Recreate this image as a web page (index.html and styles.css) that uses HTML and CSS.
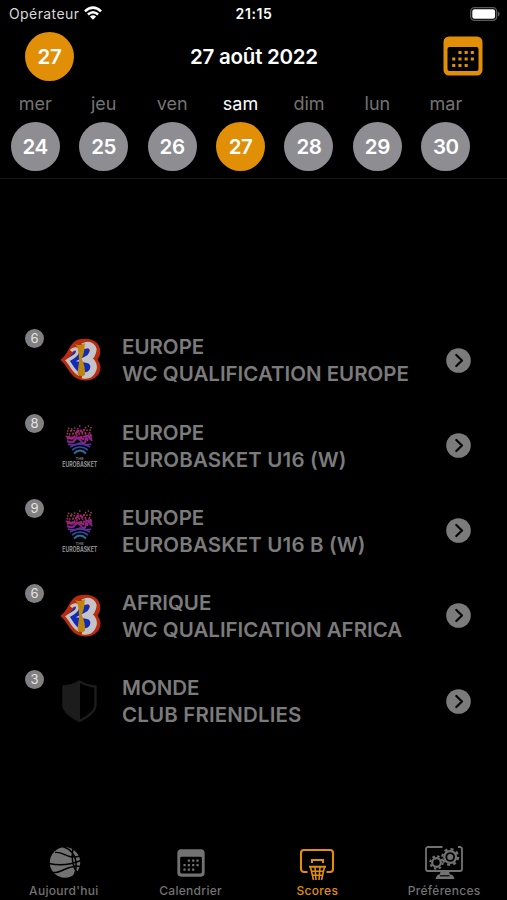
FILE: index.html
```html
<!DOCTYPE html>
<html lang="fr">
<head>
<meta charset="utf-8">
<title>Scores</title>
<link rel="stylesheet" href="styles.css">
</head>
<body>
<svg class="defs" width="0" height="0" aria-hidden="true">
  <symbol id="calendar" viewBox="0 0 40 40">
    <path fill="currentColor" fill-rule="evenodd" d="M6 .5h28a5.500 5.500 0 0 1 5.500 5.500v28a5.500 5.500 0 0 1-5.500 5.500H6A5.500 5.500 0 0 1 .5 34V6A5.500 5.500 0 0 1 6 .5ZM6.500 11A2 2 0 0 0 4.500 13v20a2 2 0 0 0 2 2h27a2 2 0 0 0 2-2V13a2 2 0 0 0-2-2Z"/>
    <path fill="none" stroke="currentColor" stroke-width="3.100" d="M15.400 16.500h3.100m3.100 0h3.100m3.100 0h3.100M9.200 23h3.100m3.100 0h3.100m3.100 0h3.100m3.100 0h3.100M9.200 29.500h3.100m3.100 0h3.100m3.100 0h3.100"/>
  </symbol>
  <symbol id="worldcup" viewBox="0 0 42 44">
    <path fill="#b82c0c" d="M.3 22C7 17 9 8 14 4C19-.5 32-.5 37 5c4.500 5 4 12 .5 16.500c4 5 4 12-.5 16.500c-5 5.500-14 5.500-20 2.500C9.500 37 7 27 .3 22Z"/>
    <path fill="#122bb5" d="M6 22C12 17 15 12 20 9l9 2 1 8 2 12-6 7-7-1C12 34 10 27 6 22Z"/>
    <g fill="none" stroke="#c4c3c7">
      <path stroke-width="6.500" d="M23 8.500C30 4.500 35 10 32.500 15c-1 3-3 5-6 6.500c7 1 8.500 7 6 11.500c-2 4-6 5-10 4"/>
      <path stroke-width="3.200" d="M11 13c3-3.500 7-2.500 6.500 1C17 18 11 20 7.500 22.500C11 26 12.500 33 19.500 36.500"/>
    </g>
    <path fill="#bd8510" d="M15 6c3 2 7 1 10-1c-1 5 0 10-3.500 15.500c2.500 5 4 11 3.500 16.500q-3 2-7 0c-1-5 1.500-11 1-16.500C18.500 15 19 11 15 6Z"/>
  </symbol>
  <symbol id="eurobasket" viewBox="0 0 42 44">
    <g fill="none" stroke-width="1.600">
      <g stroke-dasharray="1.500 1.700">
        <path stroke="#914052" d="M6 4c3 2 6 1 8-1M17 2h2m4 2l5-3M29 3v3M5 7l25-1M7 10h22"/>
        <path stroke="#b52470" d="M9 6l5 8M16 4l-2 12M22 5l3 8M28 8l-4 7M5 9l5 7M29 10l-4 7M13 9h12"/>
      </g>
      <path stroke="#a42378" stroke-width="2" stroke-dasharray="4 .5" d="M4 12q6 4 12 2t14-2M5 15q6-3 12-1t13 0M14 9q4-5 7 0"/>
      <path stroke="#7e278e" stroke-width="2" d="M5 17q6 3 8-1t6 1 5-2 6 2"/>
      <path stroke="#6a2c9b" d="M6 20q6 2 12-1 6 3 11 1"/>
      <path stroke="#4a359e" d="M8 23q10-6 20 0"/>
      <path stroke="#344c9f" d="M10 26q8-6 16 0"/>
      <path stroke="#2174a2" stroke-width="1.800" d="M12 29.500q6-6 12 0"/>
    </g>
  </symbol>
  <symbol id="shield" viewBox="0 0 42 44">
    <path fill="none" stroke="#1c1c1c" stroke-width="2.400" stroke-linejoin="round" d="M19.500 2.500Q27 7 35.500 7.500V26q0 8-16 16Q3.500 34 3.500 26V7.500Q12 7 19.500 2.500Z"/>
    <path fill="#1c1c1c" d="M20 2Q12 7 3 7.500V26q0 8 17 16.500Z"/>
  </symbol>
  <symbol id="chevron" viewBox="0 0 25 25">
    <circle cx="12.500" cy="12.500" r="12.300" fill="#7b7b7b"/>
    <path fill="none" stroke="#050505" stroke-width="2.200" stroke-linecap="round" stroke-linejoin="round" d="M10.300 7l5.700 5.500-5.700 5.500"/>
  </symbol>
</svg>

<div class="status">
  <div class="network">
    <span class="carrier">Opérateur</span>
    <svg class="wifi" viewBox="0 0 18 14"><g fill="none" stroke="#fff" stroke-width="2.500"><path d="M.9 5.300Q9-2.100 17.100 5.300M3.900 8.500Q9 3.900 14.100 8.500"/></g><path fill="#fff" d="M5.900 10.500Q9 8 12.100 10.500L9 13.700Z"/></svg>
  </div>
  <span class="clock">21:15</span>
  <svg class="battery" viewBox="0 0 30 14"><rect x=".7" y=".7" width="26" height="12.600" rx="3.800" fill="none" stroke="#5b5b5b" stroke-width="1.300"/><rect x="2.300" y="2.300" width="22.800" height="9.400" rx="2.200" fill="#fff"/><path fill="#5b5b5b" d="M28 4.700q1.700.6 1.700 2.300T28 9.300Z"/></svg>
</div>

<header class="header">
  <span class="disc active">27</span>
  <h1 class="title">27 août 2022</h1>
  <svg class="picker"><use href="#calendar"/></svg>
</header>

<nav class="week">
  <div class="day"><span class="name">mer</span><span class="disc">24</span></div>
  <div class="day"><span class="name">jeu</span><span class="disc">25</span></div>
  <div class="day"><span class="name">ven</span><span class="disc">26</span></div>
  <div class="day"><span class="name now">sam</span><span class="disc active">27</span></div>
  <div class="day"><span class="name">dim</span><span class="disc">28</span></div>
  <div class="day"><span class="name">lun</span><span class="disc">29</span></div>
  <div class="day"><span class="name">mar</span><span class="disc">30</span></div>
</nav>

<main class="list">
  <div class="row"><span class="count">6</span><svg class="logo"><use href="#worldcup"/></svg><div class="label"><div>EUROPE</div><div>WC QUALIFICATION EUROPE</div></div><svg class="go"><use href="#chevron"/></svg></div>
  <div class="row"><span class="count">8</span><svg class="logo" viewBox="0 0 42 44"><use href="#eurobasket" x="2" width="42" height="44"/><text class="logo-small" x="15.500" y="36">THE</text><text class="logo-name" x="2.300" y="43" textLength="35" lengthAdjust="spacingAndGlyphs">EUROBASKET</text></svg><div class="label"><div>EUROPE</div><div class="wide">EUROBASKET U16 (W)</div></div><svg class="go"><use href="#chevron"/></svg></div>
  <div class="row"><span class="count">9</span><svg class="logo" viewBox="0 0 42 44"><use href="#eurobasket" x="2" width="42" height="44"/><text class="logo-small" x="15.500" y="36">THE</text><text class="logo-name" x="2.300" y="43" textLength="35" lengthAdjust="spacingAndGlyphs">EUROBASKET</text></svg><div class="label"><div>EUROPE</div><div class="wide">EUROBASKET U16 B (W)</div></div><svg class="go"><use href="#chevron"/></svg></div>
  <div class="row"><span class="count">6</span><svg class="logo"><use href="#worldcup"/></svg><div class="label"><div>AFRIQUE</div><div>WC QUALIFICATION AFRICA</div></div><svg class="go"><use href="#chevron"/></svg></div>
  <div class="row"><span class="count">3</span><svg class="logo"><use href="#shield"/></svg><div class="label"><div>MONDE</div><div class="wide">CLUB FRIENDLIES</div></div><svg class="go"><use href="#chevron"/></svg></div>
</main>

<footer class="tabs">
  <div class="tab">
    <svg class="tab-icon" viewBox="0 0 42 36"><circle cx="22" cy="18.500" r="15.200" fill="currentColor"/><g fill="none" stroke="#000" stroke-width="1.500"><path d="M6 19.500Q22 23 38 16.500M12 8.500C21 7 23 16 37.500 12M9.500 28.500C19 30 24 20 37.500 22.500M20 2.500Q32 7 33 18T29 34M30 4Q27 20 35 30"/></g></svg>
    <span>Aujourd'hui</span>
  </div>
  <div class="tab">
    <svg class="tab-icon" viewBox="0 0 42 36"><use href="#calendar" x="7" y="5" width="28" height="28"/></svg>
    <span>Calendrier</span>
  </div>
  <div class="tab selected">
    <svg class="tab-icon" viewBox="0 0 42 36"><g fill="none" stroke="currentColor" stroke-width="2.100"><path d="M11.500 28H8a3 3 0 0 1-3-3V9a3 3 0 0 1 3-3h26a3 3 0 0 1 3 3v16a3 3 0 0 1-3 3h-3.500M16 19v-3h11v3M13 22.800h17"/><path stroke-width="1.600" d="M14.500 23l3 13M28.500 23l-3 13M19 23l1 13M24 23l-1 13M15 27.300h13M16 31.300h11"/></g></svg>
    <span>Scores</span>
  </div>
  <div class="tab">
    <svg class="tab-icon" viewBox="0 0 42 36"><g fill="none" stroke="currentColor" stroke-width="1.800"><path d="M19.500 3H5a2 2 0 0 0-2 2v20a2 2 0 0 0 2 2H37a2 2 0 0 0 2-2V5a2 2 0 0 0-2-2h-2"/><circle cx="13.500" cy="18.500" r="4.300" stroke-width="2.200"/><circle cx="13.500" cy="18.500" r="6.200" stroke-width="2" stroke-dasharray="2.400 2.470"/><circle cx="27.200" cy="13" r="5.900" stroke-width="2.200"/><circle cx="27.200" cy="13" r="7.900" stroke-width="2.200" stroke-dasharray="3.100 3.105"/></g><circle cx="27.200" cy="13" r="3" fill="currentColor"/><path fill="currentColor" d="M17.500 27.500h8.500l.8 2.800q4 .7 4.700 4.700H12.500q.7-4 4.300-4.700Z"/><path stroke="#000" stroke-width="1.200" d="M17 31.800h9.500"/></svg>
    <span>Préférences</span>
  </div>
</footer>
</body>
</html>
```
FILE: styles.css
```css
* { box-sizing: border-box; }
body {
  margin: 0;
  width: 507px;
  height: 900px;
  overflow: hidden;
  display: flex;
  flex-direction: column;
  background: #000;
  color: #fff;
  font-family: Inter, "Liberation Sans", sans-serif;
}
.defs { position: absolute; }
svg { display: block; flex: none; }

.status {
  height: 28px;
  display: grid;
  grid-template-columns: 1fr 60px 1fr;
  align-items: center;
  padding: 0 7px 0 9px;
  font-size: 14px;
  line-height: 28px;
}
.network { display: flex; align-items: center; gap: 5px; }
.carrier { color: #d8d8d8; letter-spacing: 0.400px; }
.wifi { width: 18px; height: 14px; margin-top: -2px; }
.clock { font-weight: 600; text-align: center; letter-spacing: 0.600px; margin-right: 1px; }
.battery { width: 30px; height: 14px; justify-self: end; margin-top: -1px; }

.header {
  height: 60px;
  display: flex;
  align-items: center;
  justify-content: space-between;
  padding: 0 24px 4px 25px;
}
.title {
  margin: 0 9px 0 0;
  font-size: 20.5px;
  font-weight: 600;
  letter-spacing: -0.25px;
}
.picker { width: 40px; height: 40px; color: #e08f07; }
.disc {
  width: 49px;
  height: 49px;
  border-radius: 50%;
  background: #8e8d92;
  font-size: 20.5px;
  font-weight: 600;
  letter-spacing: -0.4px;
  line-height: 50px;
  text-align: center;
}
.disc.active { background: #e08f07; }

.week {
  height: 91px;
  display: flex;
  padding: 3px 0 0 1px;
  border-bottom: 1px solid #151515;
}
.day {
  width: 68.450px;
  display: flex;
  flex-direction: column;
  align-items: center;
}
.name {
  height: 31px;
  color: #737373;
  font-size: 18px;
  line-height: 26px;
}
.name.now { color: #fff; }

.list { flex: 1; padding-top: 138.800px; }
.row {
  height: 85.200px;
  display: grid;
  grid-template-columns: 35px 62px 1fr 25px;
  align-items: center;
  padding: 0 36.500px 0 25px;
}
.count {
  align-self: start;
  width: 19px;
  height: 19px;
  margin-top: 11px;
  border-radius: 50%;
  background: #808080;
  color: #e4e4e4;
  font-size: 13px;
  line-height: 19px;
  text-align: center;
}
.logo { width: 42px; height: 44px; overflow: visible; }
.label {
  color: #7b7b7b;
  font-size: 20.5px;
  font-weight: 600;
  line-height: 27px;
  white-space: nowrap;
}
.wide { letter-spacing: 0.150px; }
.go { width: 25px; height: 25px; }
.logo-small { fill: #777; font: 700 4px Inter, sans-serif; }
.logo-name { fill: #919191; font: 700 7px Inter, sans-serif; }

.tabs {
  height: 60px;
  display: grid;
  grid-template-columns: repeat(4, 1fr);
  color: #727272;
}
.tab {
  display: flex;
  flex-direction: column;
  align-items: center;
  padding: 4px 0 0 1px;
  font-size: 12px;
  font-weight: 500;
  line-height: 18px;
  letter-spacing: 0.3px;
}
.tab-icon { width: 42px; height: 36px; margin-bottom: 2px; overflow: visible; }
.tab.selected { color: #e08f07; }
```
